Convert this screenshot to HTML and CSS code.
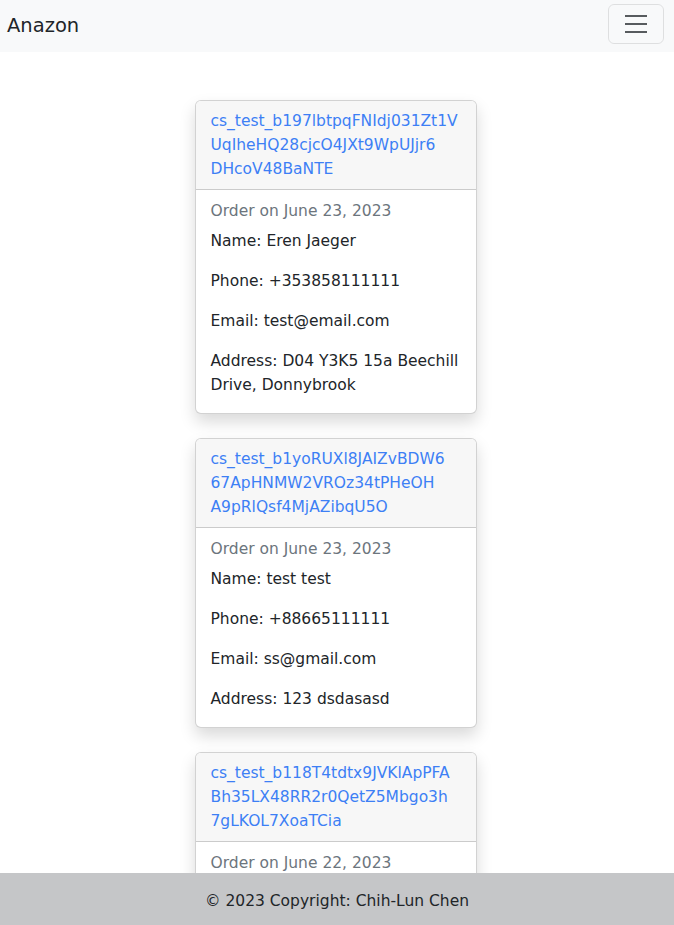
FILE: index.html
```html
<!DOCTYPE html>
<html lang="en">
<head>
<meta charset="utf-8">
<title>Anazon</title>
<link rel="stylesheet" href="styles.css">
</head>
<body>
<nav class="navbar">
  <a class="brand" href="#">Anazon</a>
  <button class="toggler" type="button" aria-label="Toggle navigation">
    <svg class="toggler-icon" width="30" height="30" viewBox="0 0 30 30" aria-hidden="true">
      <path d="M4 7h22M4 15h22M4 23h22" stroke="rgba(33,37,41,0.75)" stroke-width="2" stroke-linecap="butt" fill="none"/>
    </svg>
  </button>
</nav>

<main class="orders">
  <div class="card">
    <div class="card-header">
      <a class="order-id" href="#"><span class="line">cs_test_b197lbtpqFNIdj031Zt1V</span><span class="line">UqIheHQ28cjcO4JXt9WpUJjr6</span><span class="line">DHcoV48BaNTE</span></a>
    </div>
    <div class="card-body">
      <h6 class="subtitle">Order on June 23, 2023</h6>
      <p class="text">Name: Eren Jaeger</p>
      <p class="text">Phone: +353858111111</p>
      <p class="text">Email: test@email.com</p>
      <p class="text"><span class="line">Address: D04 Y3K5 15a Beechill</span><span class="line">Drive, Donnybrook</span></p>
    </div>
  </div>

  <div class="card">
    <div class="card-header">
      <a class="order-id" href="#"><span class="line">cs_test_b1yoRUXl8JAIZvBDW6</span><span class="line">67ApHNMW2VROz34tPHeOH</span><span class="line">A9pRlQsf4MjAZibqU5O</span></a>
    </div>
    <div class="card-body">
      <h6 class="subtitle">Order on June 23, 2023</h6>
      <p class="text">Name: test test</p>
      <p class="text">Phone: +88665111111</p>
      <p class="text">Email: ss@gmail.com</p>
      <p class="text">Address: 123 dsdasasd</p>
    </div>
  </div>

  <div class="card">
    <div class="card-header">
      <a class="order-id" href="#"><span class="line">cs_test_b118T4tdtx9JVKlApPFA</span><span class="line">Bh35LX48RR2r0QetZ5Mbgo3h</span><span class="line">7gLKOL7XoaTCia</span></a>
    </div>
    <div class="card-body">
      <h6 class="subtitle">Order on June 22, 2023</h6>
      <p class="text">Name: test test</p>
      <p class="text">Phone: +88665111111</p>
      <p class="text">Email: ss@gmail.com</p>
      <p class="text">Address: 123 dsdasasd</p>
    </div>
  </div>
</main>

<footer class="footer">© 2023 Copyright: Chih-Lun Chen</footer>
</body>
</html>
```

FILE: styles.css
```css
* {
  box-sizing: border-box;
}

html, body {
  margin: 0;
  padding: 0;
  height: 100%;
}

body {
  display: flex;
  flex-direction: column;
  overflow: hidden;
  font-family: "DejaVu Sans", "Open Sans", sans-serif;
  font-size: 15.5px;
  line-height: 24px;
  color: #212529;
  background: #ffffff;
}

.navbar {
  flex: 0 0 52px;
  display: flex;
  align-items: center;
  justify-content: space-between;
  padding: 4px 10px 8px 7px;
  background: #f8f9fa;
}

.brand {
  padding-top: 3px;
  font-size: 19.5px;
  line-height: 30px;
  color: #212529;
  text-decoration: none;
}

.toggler {
  display: flex;
  align-items: center;
  justify-content: center;
  width: 56px;
  height: 40px;
  padding: 4px 12px;
  background: transparent;
  border: 1px solid rgba(0, 0, 0, 0.1);
  border-radius: 6px;
}

.toggler-icon {
  display: block;
}

.orders {
  flex: 1 1 auto;
  min-height: 0;
  overflow-y: auto;
  scrollbar-width: none;
  display: flex;
  flex-direction: column;
  align-items: center;
  padding: 48px 3px 0 0;
}

.card {
  flex: 0 0 auto;
  width: 282px;
  margin-bottom: 24px;
  background: #ffffff;
  border: 1px solid rgba(0, 0, 0, 0.175);
  border-radius: 6px;
  box-shadow: 0 8px 16px rgba(0, 0, 0, 0.15);
  overflow: hidden;
}

.card-header {
  padding: 8px 15px;
  background: #f7f7f7;
  border-bottom: 1px solid rgba(0, 0, 0, 0.175);
}

.order-id {
  display: block;
  color: #3d7ff5;
  text-decoration: none;
}

.line {
  display: block;
  white-space: nowrap;
}

.card-body {
  padding: 16px 15px;
}

.subtitle {
  margin: -4px 0 8px;
  font-size: 15.5px;
  font-weight: 400;
  line-height: 19.2px;
  color: #6c757d;
}

.text {
  margin: 0 0 16px;
}

.text:last-child {
  margin-bottom: 0;
}

.footer {
  flex: 0 0 52px;
  padding: 16px 0 12px;
  text-align: center;
  background: #c5c6c8;
  color: #212529;
}
```
